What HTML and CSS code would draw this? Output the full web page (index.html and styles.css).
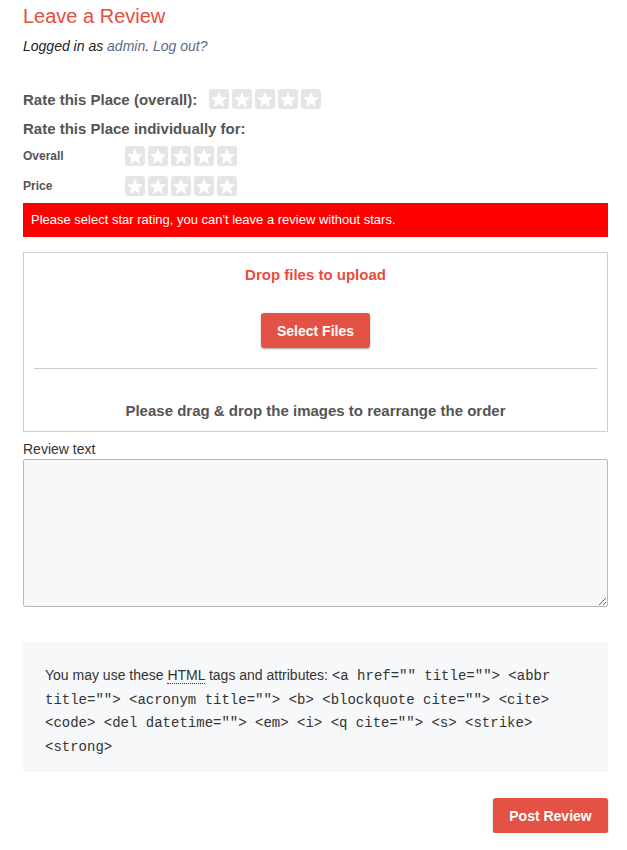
FILE: index.html
```html
<!DOCTYPE html>
<html>
<head>
<meta charset="utf-8">
<link rel="stylesheet" href="styles.css">
</head>
<body>
<div class="page">
  <h3 class="title">Leave a Review</h3>
  <p class="logged">Logged in as <a href="#">admin</a>. <a href="#">Log out?</a></p>

  <div class="rate-row main">
    <span class="rate-label">Rate this Place (overall):</span>
    <span class="stars">
      <span class="star"><svg viewBox="0 0 20 20"><polygon points="10,2.5 12.23,7.93 18.08,8.37 13.61,12.17 15,17.88 10,14.8 5,17.88 6.39,12.17 1.92,8.37 7.77,7.93"/></svg></span>
      <span class="star"><svg viewBox="0 0 20 20"><polygon points="10,2.5 12.23,7.93 18.08,8.37 13.61,12.17 15,17.88 10,14.8 5,17.88 6.39,12.17 1.92,8.37 7.77,7.93"/></svg></span>
      <span class="star"><svg viewBox="0 0 20 20"><polygon points="10,2.5 12.23,7.93 18.08,8.37 13.61,12.17 15,17.88 10,14.8 5,17.88 6.39,12.17 1.92,8.37 7.77,7.93"/></svg></span>
      <span class="star"><svg viewBox="0 0 20 20"><polygon points="10,2.5 12.23,7.93 18.08,8.37 13.61,12.17 15,17.88 10,14.8 5,17.88 6.39,12.17 1.92,8.37 7.77,7.93"/></svg></span>
      <span class="star"><svg viewBox="0 0 20 20"><polygon points="10,2.5 12.23,7.93 18.08,8.37 13.61,12.17 15,17.88 10,14.8 5,17.88 6.39,12.17 1.92,8.37 7.77,7.93"/></svg></span>
    </span>
  </div>
  <div class="indiv">Rate this Place individually for:</div>
  <div class="rate-row sub">
    <span class="sub-label">Overall</span>
    <span class="stars">
      <span class="star"><svg viewBox="0 0 20 20"><polygon points="10,2.5 12.23,7.93 18.08,8.37 13.61,12.17 15,17.88 10,14.8 5,17.88 6.39,12.17 1.92,8.37 7.77,7.93"/></svg></span>
      <span class="star"><svg viewBox="0 0 20 20"><polygon points="10,2.5 12.23,7.93 18.08,8.37 13.61,12.17 15,17.88 10,14.8 5,17.88 6.39,12.17 1.92,8.37 7.77,7.93"/></svg></span>
      <span class="star"><svg viewBox="0 0 20 20"><polygon points="10,2.5 12.23,7.93 18.08,8.37 13.61,12.17 15,17.88 10,14.8 5,17.88 6.39,12.17 1.92,8.37 7.77,7.93"/></svg></span>
      <span class="star"><svg viewBox="0 0 20 20"><polygon points="10,2.5 12.23,7.93 18.08,8.37 13.61,12.17 15,17.88 10,14.8 5,17.88 6.39,12.17 1.92,8.37 7.77,7.93"/></svg></span>
      <span class="star"><svg viewBox="0 0 20 20"><polygon points="10,2.5 12.23,7.93 18.08,8.37 13.61,12.17 15,17.88 10,14.8 5,17.88 6.39,12.17 1.92,8.37 7.77,7.93"/></svg></span>
    </span>
  </div>
  <div class="rate-row sub">
    <span class="sub-label">Price</span>
    <span class="stars">
      <span class="star"><svg viewBox="0 0 20 20"><polygon points="10,2.5 12.23,7.93 18.08,8.37 13.61,12.17 15,17.88 10,14.8 5,17.88 6.39,12.17 1.92,8.37 7.77,7.93"/></svg></span>
      <span class="star"><svg viewBox="0 0 20 20"><polygon points="10,2.5 12.23,7.93 18.08,8.37 13.61,12.17 15,17.88 10,14.8 5,17.88 6.39,12.17 1.92,8.37 7.77,7.93"/></svg></span>
      <span class="star"><svg viewBox="0 0 20 20"><polygon points="10,2.5 12.23,7.93 18.08,8.37 13.61,12.17 15,17.88 10,14.8 5,17.88 6.39,12.17 1.92,8.37 7.77,7.93"/></svg></span>
      <span class="star"><svg viewBox="0 0 20 20"><polygon points="10,2.5 12.23,7.93 18.08,8.37 13.61,12.17 15,17.88 10,14.8 5,17.88 6.39,12.17 1.92,8.37 7.77,7.93"/></svg></span>
      <span class="star"><svg viewBox="0 0 20 20"><polygon points="10,2.5 12.23,7.93 18.08,8.37 13.61,12.17 15,17.88 10,14.8 5,17.88 6.39,12.17 1.92,8.37 7.77,7.93"/></svg></span>
    </span>
  </div>

  <div class="alert">Please select star rating, you can't leave a review without stars.</div>

  <div class="upload">
    <div class="drop">Drop files to upload</div>
    <button class="btn select">Select Files</button>
    <hr class="divider">
    <div class="drag">Please drag &amp; drop the images to rearrange the order</div>
  </div>

  <label class="review-label">Review text</label>
  <textarea class="review"></textarea>

  <div class="allowed">You may use these <abbr title="HyperText Markup Language">HTML</abbr> tags and attributes: <code>&lt;a href="" title=""&gt; &lt;abbr title=""&gt; &lt;acronym title=""&gt; &lt;b&gt; &lt;blockquote cite=""&gt; &lt;cite&gt; &lt;code&gt; &lt;del datetime=""&gt; &lt;em&gt; &lt;i&gt; &lt;q cite=""&gt; &lt;s&gt; &lt;strike&gt; &lt;strong&gt; </code></div>

  <div class="actions">
    <button class="btn post">Post Review</button>
  </div>
</div>
</body>
</html>
```

FILE: styles.css
```css
* { box-sizing: border-box; }
html, body { margin: 0; padding: 0; background: #fff; }
body {
  font-family: "Liberation Sans", Arial, sans-serif;
  color: #333;
}
.page {
  padding: 4px 19px 0 23px;
  width: 627px;
}
.title {
  margin: 0;
  font-size: 20px;
  font-weight: normal;
  line-height: 24px;
  color: #e74c3c;
}
.logged {
  margin: 9px 0 0;
  font-size: 14px;
  font-style: italic;
  line-height: 18px;
  color: #222;
}
.logged a { color: #5b6a8a; text-decoration: none; }

.rate-row {
  display: flex;
  align-items: center;
}
.rate-row.main { margin-top: 33px; height: 22px; }
.rate-label {
  font-size: 15px;
  font-weight: bold;
  color: #555;
  width: 186px;
}
.stars { display: flex; gap: 3px; }
.star {
  width: 20px;
  height: 20px;
  background: #e5e5e5;
  border-radius: 3px;
  display: block;
}
.star svg { width: 20px; height: 20px; display: block; fill: #fff; }

.indiv {
  margin-top: 10px;
  font-size: 15px;
  font-weight: bold;
  color: #555;
  line-height: 18px;
}
.rate-row.sub { height: 22px; margin-top: 7px; }
.rate-row.sub + .rate-row.sub { margin-top: 8px; }
.sub-label {
  width: 102px;
  font-size: 12px;
  font-weight: bold;
  color: #555;
}

.alert {
  margin-top: 6px;
  background: #ff0000;
  color: #fff;
  font-size: 13px;
  height: 34px;
  line-height: 34px;
  padding-left: 8px;
}

.upload {
  margin-top: 15px;
  border: 1px solid #cfcfcf;
  height: 180px;
  padding: 13px 10px 0;
  text-align: center;
}
.drop {
  font-size: 15px;
  font-weight: bold;
  color: #e74c3c;
  line-height: 18px;
}
.btn {
  font-family: "Liberation Sans", Arial, sans-serif;
  font-weight: bold;
  font-size: 14px;
  color: #fff;
  background: #e35244;
  border: none;
  border-radius: 3px;
  box-shadow: 0 1px 2px rgba(0,0,0,0.35);
  height: 35px;
  padding: 0;
}
.select { margin-top: 29px; width: 109px; }
.divider {
  border: none;
  border-top: 1px solid #cccccc;
  margin: 20px 0 0;
}
.drag {
  margin-top: 33px;
  font-size: 15px;
  font-weight: bold;
  color: #555;
  line-height: 18px;
}

.review-label {
  display: block;
  margin-top: 8px;
  font-size: 14px;
  line-height: 18px;
  color: #333;
}
.review {
  display: block;
  width: 585px;
  height: 148px;
  margin-top: 1px;
  background: #f8f8f6;
  border: 1px solid #b9b9b9;
  border-radius: 2px;
  resize: vertical;
}

.allowed {
  margin-top: 35px;
  background: #f7f8fa;
  padding: 22px 22px 20px;
  font-size: 14px;
  line-height: 22.5px;
  color: #333;
  height: 130px;
}
.allowed abbr {
  text-decoration: none;
  border-bottom: 1px dotted #333;
}
.allowed code {
  font-family: "Liberation Mono", "Courier New", monospace;
  font-size: 14px;
}

.actions {
  display: flex;
  justify-content: flex-end;
  margin-top: 26px;
}
.post { width: 115px; }
```
